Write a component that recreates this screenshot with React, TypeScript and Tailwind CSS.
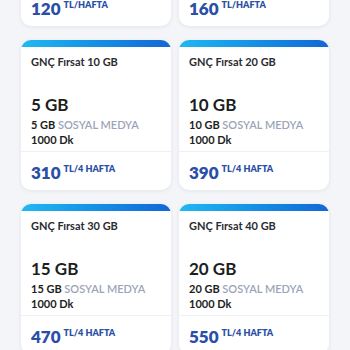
import React from 'react';

type Plan = {
  name: string;
  gb: string;
  social: string;
  price: string;
  period: string;
};

const plans: Plan[] = [
  { name: 'GNÇ Fırsat 5 GB', gb: '3 GB', social: '3 GB', price: '120', period: 'TL/HAFTA' },
  { name: 'GNÇ Fırsat 8 GB', gb: '4 GB', social: '4 GB', price: '160', period: 'TL/HAFTA' },
  { name: 'GNÇ Fırsat 10 GB', gb: '5 GB', social: '5 GB', price: '310', period: 'TL/4 HAFTA' },
  { name: 'GNÇ Fırsat 20 GB', gb: '10 GB', social: '10 GB', price: '390', period: 'TL/4 HAFTA' },
  { name: 'GNÇ Fırsat 30 GB', gb: '15 GB', social: '15 GB', price: '470', period: 'TL/4 HAFTA' },
  { name: 'GNÇ Fırsat 40 GB', gb: '20 GB', social: '20 GB', price: '550', period: 'TL/4 HAFTA' },
];

function PlanCard({ plan }: { plan: Plan }) {
  return (
    <div className="bg-white rounded-[10px] shadow-[0_1px_4px_rgba(30,40,70,0.08)] overflow-hidden flex flex-col">
      <div className="h-[7px] bg-gradient-to-r from-[#22b8f2] to-[#1566d6]" />
      <div className="px-[10px] pt-[8px] pb-[4px]">
        <p className="text-[11px] font-bold text-[#2a2c31] leading-[14px]">{plan.name}</p>
        <p className="mt-[26px] text-[17px] font-bold text-[#1c1e22] leading-[20px]">{plan.gb}</p>
        <p className="mt-[3px] text-[11px] leading-[14px] font-bold text-[#1c1e22]">
          {plan.social} <span className="font-semibold text-[#9ba4b8]">SOSYAL MEDYA</span>
        </p>
        <p className="mt-[1px] text-[11px] leading-[14px] font-bold text-[#1c1e22]">1000 Dk</p>
      </div>
      <div className="border-t border-[#eef0f3] px-[10px] pt-[10px] pb-[6px] flex items-start text-[#2a4fa6]">
        <span className="text-[17px] font-extrabold leading-[22px]">{plan.price}</span>
        <span className="ml-[3px] text-[9px] font-extrabold leading-[12px] mt-[1px]">{plan.period}</span>
      </div>
    </div>
  );
}

export default function App() {
  return (
    <div
      className="w-[350px] h-[350px] overflow-hidden bg-[#f3f5f8]"
      style={{ fontFamily: 'Lato, "Open Sans", Arial, sans-serif' }}
    >
      <div className="grid grid-cols-2 gap-x-[8px] gap-y-[14px] pl-[21px] pr-[21px] mt-[-124px]">
        {plans.map((p) => (
          <PlanCard key={p.price} plan={p} />
        ))}
      </div>
    </div>
  );
}
